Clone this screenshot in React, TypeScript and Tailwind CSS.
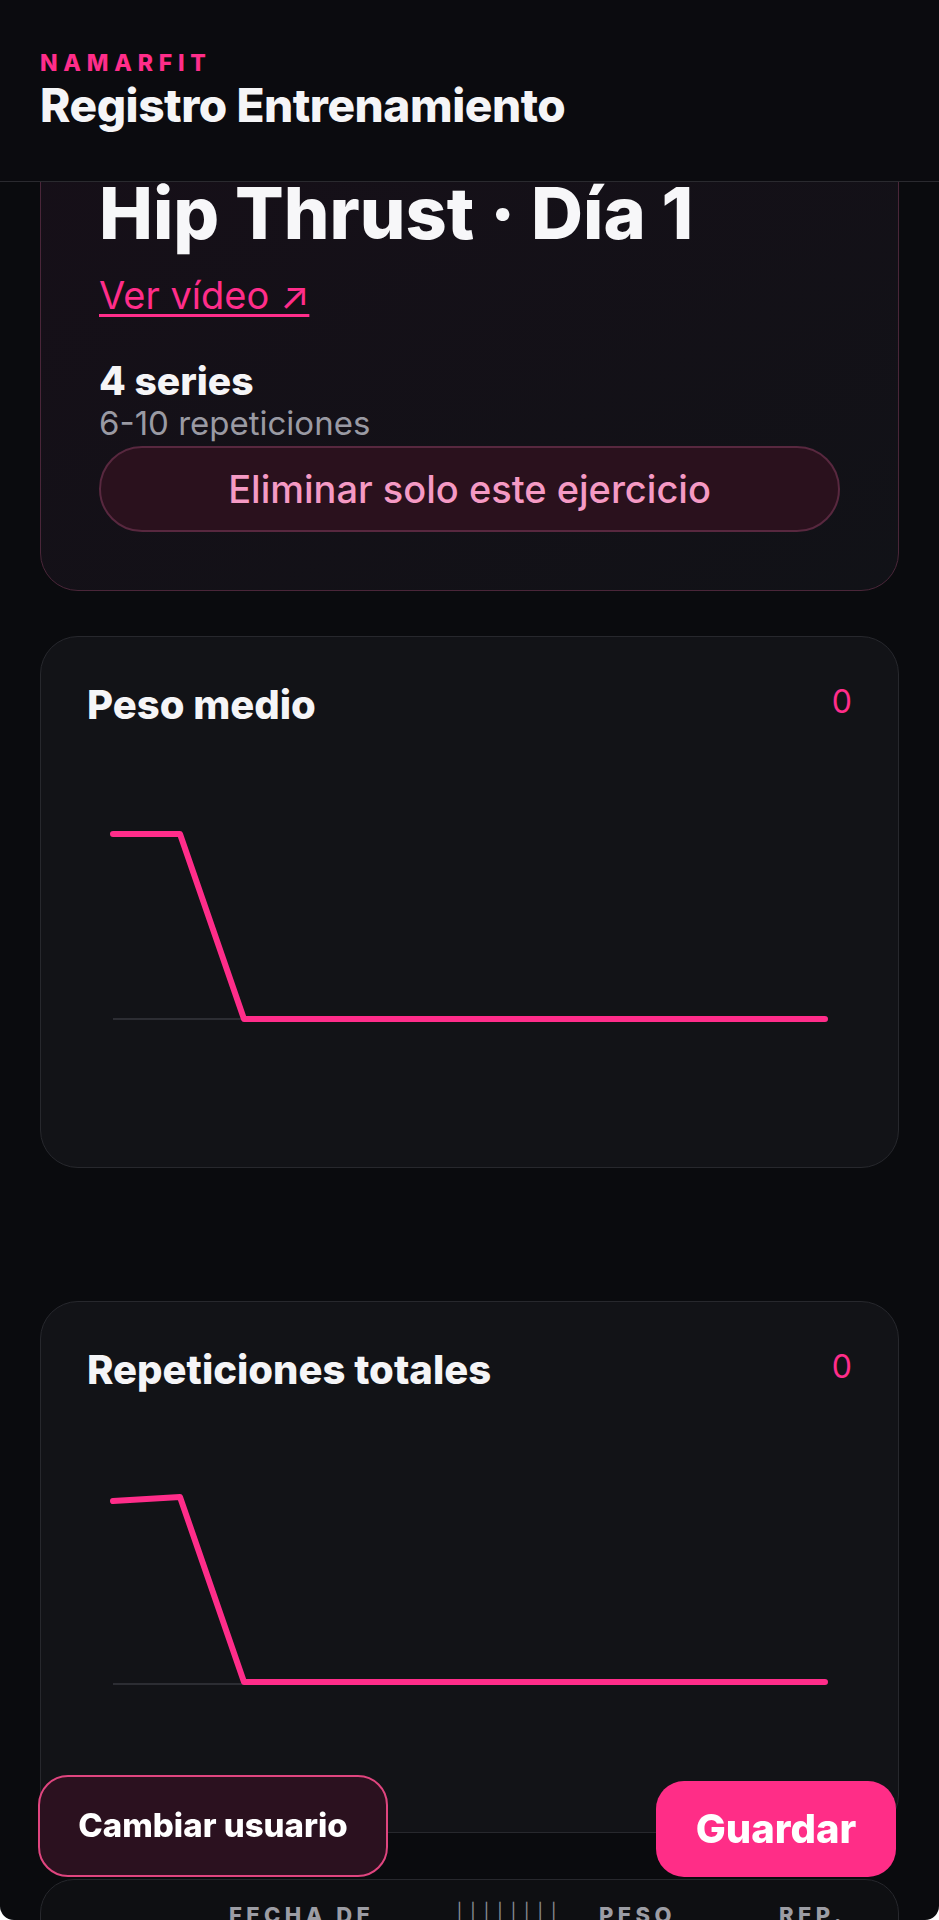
import React from "react"

const PINK = "#ff2d8a"

type Pt = [number, number]

function LineChart({ pts }: { pts: Pt[] }) {
  const d = pts.map((p, i) => (i === 0 ? "M" : "L") + p[0] + " " + p[1]).join(" ")
  return (
    <svg viewBox="0 0 766 400" className="block w-[766px] h-[400px]">
      <line x1="26" y1="294" x2="738" y2="294" stroke="#2c2d33" strokeWidth="2" />
      <path d={d} fill="none" stroke={PINK} strokeWidth="6" strokeLinecap="round" strokeLinejoin="round" />
    </svg>
  )
}

function ChartCard({ title, pts }: { title: string; pts: Pt[] }) {
  return (
    <section className="mx-[40px] h-[532px] rounded-[38px] border border-[#27282d] bg-[#121317] px-[46px] pt-[48px]">
      <div className="flex items-start justify-between">
        <h2 className="text-[40px] leading-none font-extrabold text-[#f5f5f7]">{title}</h2>
        <span className="mt-[1px] text-[32px] leading-none text-[#ff2d8a]">0</span>
      </div>
      <LineChart pts={pts} />
    </section>
  )
}

export default function App() {
  return (
    <div className="h-screen overflow-hidden bg-white" style={{ fontFamily: "Inter, 'Noto Sans', sans-serif" }}>
      <div className="relative h-full overflow-hidden rounded-b-[14px] bg-[#0a0b0e]">
        <header className="fixed inset-x-0 top-0 z-20 h-[182px] border-b border-[#2a2a2f] bg-[#0b0b0f] px-[40px] pt-[52px]">
          <p className="text-[23px] leading-none font-extrabold tracking-[0.25em] text-[#ff2d8a]">NAMARFIT</p>
          <h1 className="mt-[7px] text-[46px] leading-none font-extrabold tracking-[-0.01em] text-[#f5f5f7]">Registro Entrenamiento</h1>
        </header>

        <main className="pt-[120px]">
          <section className="mx-[40px] rounded-[38px] border border-[#4a2639] bg-gradient-to-br from-[#160f18] to-[#111217] px-[58px] pt-[56px] pb-[58px]">
            <h2 className="text-[72px] leading-none font-extrabold text-[#f7f7f9]">Hip Thrust · Día 1</h2>
            <a className="mt-[27px] block w-fit text-[38px] leading-none text-[#ff2d8a] underline decoration-[3px] underline-offset-[5px]">
              Ver vídeo ↗
            </a>
            <p className="mt-[47px] text-[39px] leading-none font-extrabold text-[#f5f5f7]">4 series</p>
            <p className="mt-[7px] text-[33px] leading-none text-[#9a9aa3]">6-10 repeticiones</p>
            <button className="mt-[6px] flex h-[86px] w-full items-center justify-center rounded-full border-2 border-[#58283f] bg-[#2a111d] text-[38px] font-medium text-[#f59ac4]">
              Eliminar solo este ejercicio
            </button>
          </section>

          <div className="mt-[45px]">
            <ChartCard title="Peso medio" pts={[[26, 109], [93, 109], [157, 294], [738, 294]]} />
          </div>
          <div className="mt-[133px]">
            <ChartCard title="Repeticiones totales" pts={[[26, 111], [93, 107], [157, 292], [738, 292]]} />
          </div>

          <section className="mx-[40px] mt-[46px] h-[300px] rounded-[34px] border border-[#27282d] bg-[#0e0f12] pt-[24px]">
            <div className="flex text-[22px] leading-none font-extrabold tracking-[0.2em] text-[#9c9da4]">
              <span className="ml-[188px] w-[227px]">FECHA DE</span>
              <span className="w-[143px] font-light tracking-[0.3em] text-[#8a8b92]">||||||||</span>
              <span className="w-[180px]">PESO</span>
              <span>REP.</span>
            </div>
          </section>
        </main>

        <div className="fixed bottom-[43px] left-[38px] right-[43px] z-30 flex items-end justify-between">
          <button className="flex h-[102px] w-[350px] items-center justify-center rounded-[30px] border-2 border-[#e0457f] bg-[#2b111f] text-[33px] font-extrabold text-white">
            Cambiar usuario
          </button>
          <button className="flex h-[96px] w-[240px] items-center justify-center rounded-[28px] bg-[#ff2d87] text-[40px] font-extrabold text-white">
            Guardar
          </button>
        </div>
      </div>
    </div>
  )
}
